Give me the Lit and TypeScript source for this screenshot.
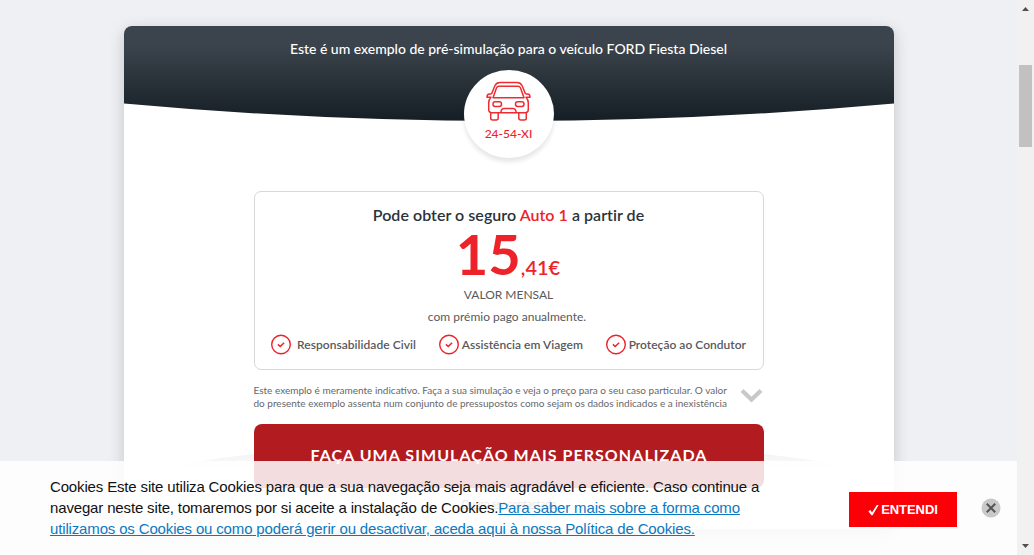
import { LitElement, html, css } from "lit";
import { customElement } from "lit/decorators.js";

const tick = html`<svg class="tick" width="22" height="22" viewBox="0 0 22 22" fill="none" stroke="#ee2229">
  <circle cx="11" cy="10.500" r="9.300" stroke-width="1.400"/><path d="M7.900 10.400l2.300 2.100 3.900-3.700" stroke-width="1.500"/></svg>`;

@customElement("app-root")
export class AppRoot extends LitElement {
  static styles = css`
    :host { display: block; position: relative; width: 1034px; height: 555px; overflow: hidden; background: #eff0f3; font-family: Lato, sans-serif; color: #58595b; }
    * { box-sizing: border-box; }
    .page { width: 1017px; padding: 26px 0 0 124px; }
    .card { position: relative; width: 770px; height: 503px; background: #fff; border-radius: 8px; display: flex; flex-direction: column; align-items: center; overflow: hidden; }
    .shell { border-radius: 8px; width: 770px; box-shadow: 0 4px 16px rgba(0,0,0,.18); }
    .arc, .swoosh { position: absolute; left: 0; top: 0; }
    .swoosh { top: 424px; }
    .head { position: relative; color: #fff; font-size: 14px; line-height: 18px; margin: 14px 1px 0 0; font-weight: 500; white-space: nowrap; letter-spacing: -.01px; }
    .badge { position: relative; width: 90px; height: 88px; margin: 12px 1px 0 0; border-radius: 50%; background: #fff; box-shadow: 0 4px 4px rgba(50,60,75,.13); display: flex; flex-direction: column; align-items: center; padding-top: 11px; flex: none; }
    .plate { color: #ee2229; font-size: 12px; line-height: 14px; margin-top: 5px; font-weight: 500; }
    .offer { width: 510px; height: 179px; margin-top: 33px; border: 1px solid #d6d7d8; border-radius: 7px; display: flex; flex-direction: column; align-items: center; white-space: nowrap; flex: none; }
    .title { color: #2a3339; font-size: 16px; line-height: 20px; margin: 13px 1px 0 0; font-weight: 600; letter-spacing: .04px; }
    .red { color: #ee2229; }
    .price { color: #ee2229; height: 58px; line-height: 58px; font-size: 56px; font-weight: 700; display: flex; align-items: baseline; margin-right: 2px; }
    .cents { font-size: 20px; font-weight: 600; line-height: 24px; }
    .month { font-size: 12px; line-height: 16px; margin: 4px 1px 0 0; }
    .annual { font-size: 12px; line-height: 16px; margin: 6px 4px 0 0; }
    .perks { display: flex; width: 100%; padding: 0 17px 0 15px; margin-top: 9px; font-size: 12px; line-height: 22px; font-weight: 600; justify-content: space-between; }
    .perk { display: flex; gap: 2px; }
    .perk + .perk { letter-spacing: .02px; }
    .perk.first { gap: 5px; letter-spacing: .04px; }
    .note { width: 511px; display: flex; justify-content: space-between; margin-top: 14px; font-size: 10px; line-height: 13px; white-space: nowrap; color: #66676a; }
    .chev { margin: 3px 1px 0 0; }
    .cta { position: relative; width: 510px; height: 64px; margin-top: 14px; border-radius: 8px; background: #b21c21; color: #fff; font-size: 16px; line-height: 62px; font-weight: 700; text-align: center; letter-spacing: 1.05px; flex: none; }
    .contact { position: relative; font-size: 10px; line-height: 14px; text-decoration: underline; margin-top: 8px; }
    .bar { position: absolute; left: 0; top: 461px; width: 1017px; height: 94px; background: rgba(255,255,255,.85); display: flex; font-family: "Liberation Sans", Arial, sans-serif; }
    .msg { margin: 15px 0 0 50px; width: 799px; font-size: 15px; line-height: 21px; color: #111; white-space: nowrap; letter-spacing: -.152px; }
    .msg a { color: #0b79bf; text-decoration: underline; }
    .ok { width: 108px; height: 35px; margin-top: 31px; background: #fb0007; color: #fff; font-size: 13px; font-weight: 700; display: flex; align-items: center; justify-content: center; gap: 2px; }
    .ok span { letter-spacing: -.05px; }
    .close { margin: 37px 0 0 24px; }
    .scroll { position: absolute; right: 0; top: 0; width: 17px; height: 555px; background: #f1f1f1; display: flex; flex-direction: column; align-items: center; padding: 6px 0 6px 0; }
    .thumb { width: 13px; height: 82px; background: #c1c1c1; margin-top: 53px; margin-bottom: auto; flex: none; }
  `;
  render() {
    return html`
      <div class="page"><div class="shell"><div class="card">
        <svg class="arc" width="770" height="96" viewBox="0 0 770 96">
          <defs><linearGradient id="g" x1="0" y1="0" x2="0" y2="1"><stop offset=".2" stop-color="#3b444c"/><stop offset="1" stop-color="#151e24"/></linearGradient></defs>
          <path d="M0 0H770V77.500Q578 95 385 95Q192 95 0 77.500Z" fill="url(#g)"/>
        </svg>
        <svg class="swoosh" width="770" height="79" viewBox="0 0 770 79">
          <defs><linearGradient id="s" x1="0" y1="0" x2="0" y2="1"><stop offset="0" stop-color="#f4f4f4"/><stop offset="1" stop-color="#fff"/></linearGradient></defs>
          <path d="M0 26Q65 11 130 4H640Q705 11 770 26V27H0Z" fill="url(#s)"/></svg>
        <div class="head">Este é um exemplo de pré-simulação para o veículo FORD Fiesta Diesel</div>
        <div class="badge">
          <svg width="46" height="41" viewBox="0 0 46 41" fill="none" stroke="#ee2b31" stroke-width="1.500" stroke-linejoin="round">
            <path d="M5.500 13L9 4.500Q10.500 1.500 14 1.500H31Q34.500 1.500 36 4.500L39.500 13"/>
            <path d="M7 16.700L10.500 7Q11.200 5.300 13 5.300H32Q33.800 5.300 34.500 7L38 16.700Z"/>
            <path d="M5.500 13H3.500Q1 13 1 16.200H5Q2.700 18.500 2.700 22V28.500Q2.700 31.700 6 31.700H39Q42.300 31.700 42.300 28.500V22Q42.300 18.500 40 16.200H44Q44 13 41.500 13H39.500"/>
            <path d="M4.700 31.700V37Q4.700 39 6.700 39H10.200Q12.200 39 12.200 37V31.700M32.800 31.700V37Q32.800 39 34.800 39H38.300Q40.300 39 40.300 37V31.700"/>
            <rect x="7" y="20.800" width="8.500" height="4.700" rx="2.200"/><rect x="29.500" y="20.800" width="8.500" height="4.700" rx="2.200"/>
            <path d="M15 31.700V30.500Q15.500 27.500 18 27.500H27Q29.500 27.500 30 30.500V31.700"/>
          </svg>
          <div class="plate">24-54-XI</div>
        </div>
        <div class="offer">
          <div class="title">Pode obter o seguro <span class="red">Auto 1</span> a partir de</div>
          <div class="price">15<span class="cents">,41€</span></div>
          <div class="month">VALOR MENSAL</div>
          <div class="annual">com prémio pago anualmente.</div>
          <div class="perks">
            <div class="perk first">${tick}<span>Responsabilidade Civil</span></div>
            <div class="perk">${tick}<span>Assistência em Viagem</span></div>
            <div class="perk">${tick}<span>Proteção ao Condutor</span></div>
          </div>
        </div>
        <div class="note"><div>Este exemplo é meramente indicativo. Faça a sua simulação e veja o preço para o seu caso particular. O valor<br>do presente exemplo assenta num conjunto de pressupostos como sejam os dados indicados e a inexistência</div>
          <svg class="chev" width="25" height="18" viewBox="0 0 25 18"><path d="M3 3.500L12.500 12.500L22 3.500" fill="none" stroke="#c8c8c8" stroke-width="4.200"/></svg></div>
        <div class="cta">FAÇA UMA SIMULAÇÃO MAIS PERSONALIZADA</div>
        <div class="contact">Quero ser contactado</div>
      </div></div></div>
      <div class="bar">
        <div class="msg">Cookies Este site utiliza Cookies para que a sua navegação seja mais agradável e eficiente. Caso continue a<br>navegar neste site, tomaremos por si aceite a instalação de Cookies.<a>Para saber mais sobre a forma como<br>utilizamos os Cookies ou como poderá gerir ou desactivar, aceda aqui à nossa Política de Cookies.</a></div>
        <div class="ok"><svg width="11" height="12" viewBox="0 0 11 12"><path d="M.3 7.200L2.500 6L4 8.400L8.800 1L10.700 1L4.600 11.200H3.400Z" fill="#fff"/></svg><span>ENTENDI</span></div>
        <svg class="close" width="20" height="20" viewBox="0 0 20 20"><circle cx="10" cy="10" r="9.500" fill="#c9c9c9"/><path d="M5.800 5.800L14.200 14.200M14.200 5.800L5.800 14.200" stroke="#555" stroke-width="2"/></svg>
      </div>
      <div class="scroll">
        <svg width="7" height="6" viewBox="0 0 7 6"><path d="M0 5L3.500 1L7 5Z" fill="#505050"/></svg>
        <div class="thumb"></div>
        <svg width="7" height="6" viewBox="0 0 7 6"><path d="M0 1L3.500 5L7 1Z" fill="#505050"/></svg>
      </div>`;
  }
}
